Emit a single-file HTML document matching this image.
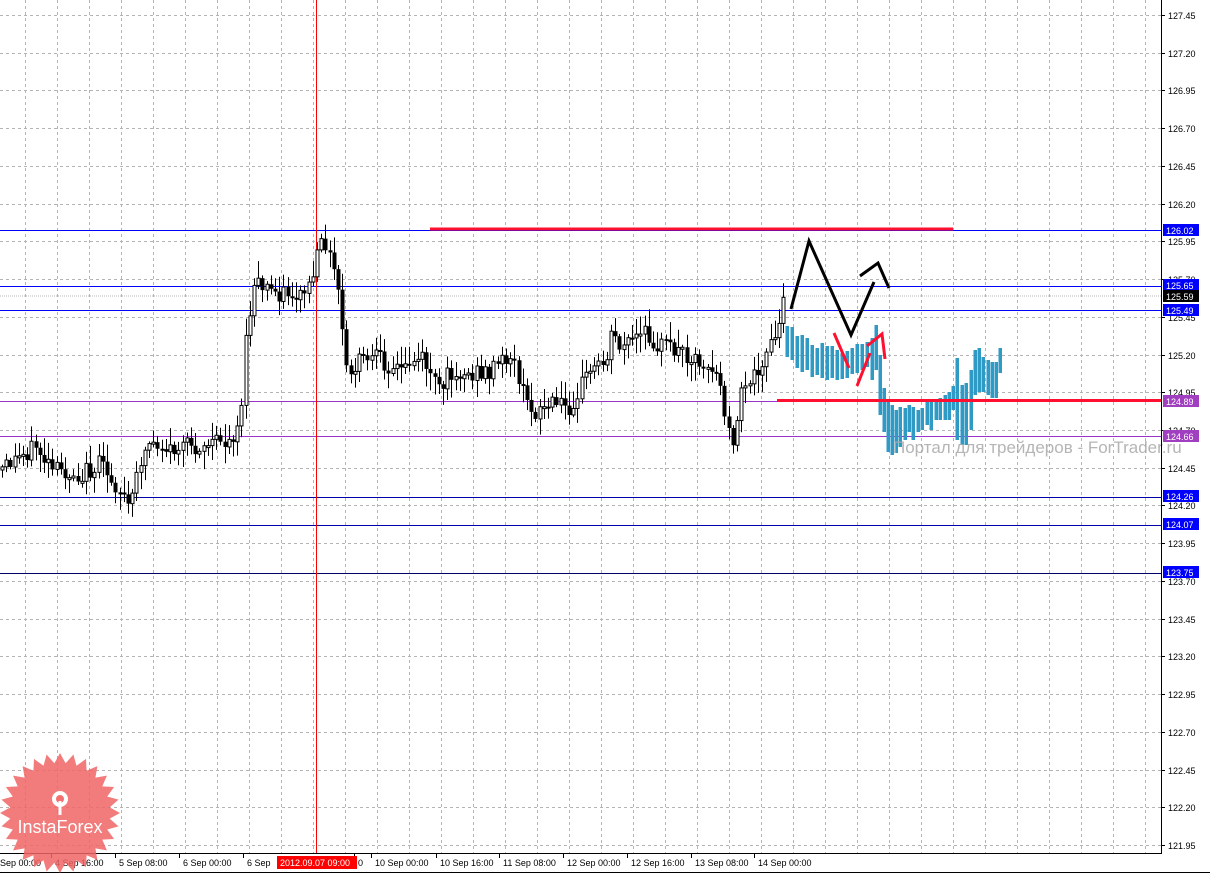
<!DOCTYPE html>
<html><head><meta charset="utf-8">
<style>
html,body{margin:0;padding:0;background:#fff;width:1210px;height:874px;overflow:hidden}
svg{display:block;font-family:"Liberation Sans",Tahoma,sans-serif}
</style></head>
<body>
<svg id="c" width="1210" height="874" viewBox="0 0 1210 874" xmlns="http://www.w3.org/2000/svg">
<rect width="1210" height="874" fill="#fff"/>
<g id="grid"></g>
<g id="lines">
<line x1="0" y1="296" x2="1161" y2="296" stroke="#b8b8b8" stroke-width="1" stroke-dasharray="1,1"/>
<line x1="0" y1="230.5" x2="1161" y2="230.5" stroke="#0000ff"/>
<line x1="0" y1="286.5" x2="1161" y2="286.5" stroke="#0000ff"/>
<line x1="0" y1="310.5" x2="1161" y2="310.5" stroke="#0000ff"/>
<line x1="0" y1="401.5" x2="1161" y2="401.5" stroke="#9933cc"/>
<line x1="0" y1="436.5" x2="1161" y2="436.5" stroke="#9933cc"/>
<line x1="0" y1="497.5" x2="1161" y2="497.5" stroke="#0000aa"/>
<line x1="0" y1="525.5" x2="1161" y2="525.5" stroke="#0000aa"/>
<line x1="0" y1="573.5" x2="1161" y2="573.5" stroke="#000066"/>
<line x1="316.5" y1="0" x2="316.5" y2="853" stroke="#ff0000"/>
</g>
<g id="candles"></g>
<g id="blue" fill="#2f9ac4"></g>
<line x1="430" y1="229" x2="953" y2="229" stroke="#ff1030" stroke-width="3"/>
<line x1="777" y1="400.5" x2="1161" y2="400.5" stroke="#ff1030" stroke-width="3"/>
<polyline points="791,309 809,241 851,335 874,282" fill="none" stroke="#000" stroke-width="3"/>
<polyline points="860,276 878,263 889,288" fill="none" stroke="#000" stroke-width="3"/>
<line x1="834" y1="333" x2="849" y2="368" stroke="#ff1030" stroke-width="3"/>
<line x1="857" y1="386" x2="870" y2="353" stroke="#ff1030" stroke-width="3"/>
<polyline points="867,346 882,334 885,359" fill="none" stroke="#ff1030" stroke-width="3"/>
<text x="893" y="453" font-size="17" fill="#a8a8a8" fill-opacity="0.85">Портал для трейдеров - ForTrader.ru</text>
<line x1="1161.5" y1="0" x2="1161.5" y2="853" stroke="#000"/>
<line x1="0" y1="853.5" x2="1162" y2="853.5" stroke="#000"/>
<line x1="0" y1="872.5" x2="1210" y2="872.5" stroke="#000"/>
<g id="plabels" font-size="9" fill="#000"></g>
<g id="tlabels" font-size="9" fill="#000"></g>
<g id="tags" font-size="9"></g>
<g transform="translate(60,813)">
<polygon id="star" fill="#f06464" fill-opacity="0.85"/>
<g fill="#fff">
<circle cx="0" cy="-14" r="8"/>
<circle cx="0" cy="-14" r="4" fill="#f27070"/>
<rect x="-1.5" y="-12" width="3" height="14"/>
</g>
<text x="0" y="20" font-size="18" fill="#fff" text-anchor="middle">InstaForex</text>
</g>
</svg>
<script>
(function(){
var NS="http://www.w3.org/2000/svg";
function el(p,t,a,txt){var e=document.createElementNS(NS,t);for(var k in a)e.setAttribute(k,a[k]);if(txt!=null)e.textContent=txt;p.appendChild(e);return e;}
var g=document.getElementById('grid');
for(var k=0;k<=22;k++){var y=Math.round(15+37.73*k)+.5;
 el(g,'line',{x1:0,y1:y,x2:1161,y2:y,stroke:'#b4b4b4','stroke-dasharray':'3,3'});
 el(document.getElementById('plabels'),'line',{x1:1161,y1:y,x2:1165,y2:y,stroke:'#000'});
 el(document.getElementById('plabels'),'text',{x:1168,y:y+3.5},(127.45-0.25*k).toFixed(2));}
for(var x=25;x<1161;x+=32){el(g,'line',{x1:x+.5,y1:0,x2:x+.5,y2:853,stroke:'#b4b4b4','stroke-dasharray':'3,3'});}
var tl=document.getElementById('tlabels');
var T=[["Sep 00:00",0],["4 Sep 16:00",55],["5 Sep 08:00",119],["6 Sep 00:00",183],["6 Sep",247],["0",358],["10 Sep 00:00",375],["10 Sep 16:00",440],["11 Sep 08:00",503],["12 Sep 00:00",567],["12 Sep 16:00",631],["13 Sep 08:00",695],["14 Sep 00:00",758]];
T.forEach(function(t){el(tl,'text',{x:t[1],y:866},t[0]);el(tl,'line',{x1:t[1]-3.5,y1:853,x2:t[1]-3.5,y2:858,stroke:'#000'});});
el(tl,'rect',{x:277,y:856,width:80,height:13,fill:'#ff0000'});
el(tl,'text',{x:280,y:866,fill:'#fff'},"2012.09.07 09:00");
var tg=document.getElementById('tags');
[[230,"126.02","#0000ff"],[285,"125.65","#0000ff"],[296,"125.59","#000"],[310,"125.49","#0000ff"],[401,"124.89","#a040c0"],[436,"124.66","#a040c0"],[496,"124.26","#0000ff"],[524,"124.07","#0000ff"],[572,"123.75","#0000ff"]].forEach(function(t){
 el(tg,'rect',{x:1163,y:t[0]-6,width:36,height:12,fill:t[2]});
 el(tg,'text',{x:1166,y:t[0]+4,fill:'#fff'},t[1]);});
var A=[[0,470],[35,445],[50,470],[80,475],[100,465],[120,490],[130,510],[140,460],[150,440],[170,450],[200,445],[230,440],[240,420],[245,350],[250,310],[255,285],[270,290],[300,295],[310,285],[318,255],[325,240],[330,260],[338,290],[342,330],[345,370],[350,375],[360,360],[380,360],[400,370],[420,355],[430,370],[440,395],[450,370],[470,375],[490,370],[510,355],[520,380],[525,405],[535,410],[550,405],[570,405],[580,385],[590,370],[605,360],[612,330],[620,345],[630,340],[645,335],[660,345],[680,350],[700,360],[715,370],[722,395],[728,435],[735,440],[740,400],[748,385],[755,370],[765,355],[775,340],[782,310],[786,298]];
function interp(x){for(var i=1;i<A.length;i++){if(x<=A[i][0]){var a=A[i-1],b=A[i];return a[1]+(b[1]-a[1])*(x-a[0])/(b[0]-a[0]);}}return A[A.length-1][1];}
var s=12345;function r(){s=(s*9301+49297)%233280;return s/233280;}
var cg=document.getElementById('candles');var prev=interp(0);
for(var x=2;x<=786;x+=4.2){var c=interp(x)+(r()-.5)*20;var o=prev;var tp=Math.min(o,c),bt=Math.max(o,c);if(bt-tp<2){bt=tp+2;}
 var hi=tp-2-r()*16,lo=bt+2+r()*16;var cx=Math.round(x)+.5;
 el(cg,'line',{x1:cx,y1:hi,x2:cx,y2:lo,stroke:'#000'});
 if(c<o)el(cg,'rect',{x:cx-1.5,y:tp,width:3,height:bt-tp,fill:'#fff',stroke:'#000','stroke-width':1});
 else el(cg,'rect',{x:cx-2,y:tp,width:4,height:bt-tp,fill:'#000'});
 prev=c;}
var B=[[787,326,357],[792,327,360],[797,336,368],[802,335,372],[807,338,370],[812,345,377],[817,348,375],[822,343,378],[827,346,380],[832,346,378],[837,350,380],[842,353,379],[847,351,378],[852,348,374],[857,344,373],[862,344,370],[867,342,367],[872,338,380],[876,325,370],[880,355,415],[884,388,432],[888,402,452],[892,405,455],[896,410,453],[900,407,447],[905,408,440],[909,405,432],[913,407,440],[918,410,432],[922,408,430],[927,400,425],[931,402,430],[936,400,420],[940,398,420],[945,395,420],[949,392,420],[953,386,410],[957,358,440],[962,385,445],[966,383,445],[971,370,430],[975,350,395],[979,348,392],[983,357,392],[988,360,395],[992,362,398],[996,362,398],[1000,348,373]];
var bg=document.getElementById('blue');
B.forEach(function(b){el(bg,'rect',{x:b[0]-1.5,y:b[1],width:3.5,height:b[2]-b[1]});});
var pts=[];for(var i=0;i<56;i++){var rr=i%2?50:60;var a=i*Math.PI/28;pts.push((rr*Math.sin(a)).toFixed(1)+","+(-rr*Math.cos(a)).toFixed(1));}
document.getElementById('star').setAttribute('points',pts.join(' '));
})();
</script>
</body></html>
